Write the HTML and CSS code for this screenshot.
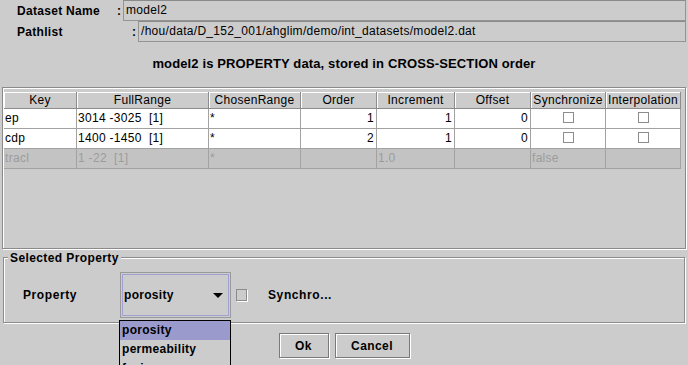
FILE: index.html
```html
<!DOCTYPE html>
<html lang="en">
<head>
	<meta charset="UTF-8">
	<title>Dataset</title>
	<link rel="stylesheet" href="styles.css">
</head>
<body>
	<div class="info">
		<div class="info-row">
			<span class="info-label name">Dataset Name</span>
			<span class="colon">:</span>
			<div class="field">model2</div>
		</div>
		<div class="info-row">
			<span class="info-label path">Pathlist</span>
			<span class="colon">:</span>
			<div class="field">/hou/data/D_152_001/ahglim/demo/int_datasets/model2.dat</div>
		</div>
	</div>
	<p class="caption">model2 is PROPERTY data, stored in CROSS-SECTION order</p>
	<div class="scroll">
		<table class="grid">
			<colgroup>
				<col class="c-key"><col class="c-full"><col class="c-chosen"><col class="c-order">
				<col class="c-inc"><col class="c-off"><col class="c-sync"><col class="c-interp">
			</colgroup>
			<thead>
				<tr>
					<th>Key</th><th>FullRange</th><th>ChosenRange</th><th>Order</th>
					<th>Increment</th><th>Offset</th><th>Synchronize</th><th>Interpolation</th>
				</tr>
			</thead>
			<tbody>
				<tr>
					<td>ep</td><td class="pre">3014 -3025  [1]</td><td>*</td>
					<td class="num">1</td><td class="num">1</td><td class="num">0</td>
					<td class="mid"><span class="box"></span></td><td class="mid"><span class="box"></span></td>
				</tr>
				<tr>
					<td>cdp</td><td class="pre">1400 -1450  [1]</td><td>*</td>
					<td class="num">2</td><td class="num">1</td><td class="num">0</td>
					<td class="mid"><span class="box"></span></td><td class="mid"><span class="box"></span></td>
				</tr>
				<tr class="off">
					<td>tracl</td><td class="pre">1 -22  [1]</td><td>*</td>
					<td></td><td>1.0</td><td></td><td>false</td><td></td>
				</tr>
			</tbody>
		</table>
	</div>
	<div class="group">
		<div class="group-title">Selected Property</div>
		<div class="prop-row">
			<span class="prop-label">Property</span>
			<div class="combo">
				<div class="combo-inner"><span>porosity</span><span class="arrow"></span></div>
			</div>
			<span class="check"></span>
			<span class="sync">Synchro...</span>
		</div>
	</div>
	<div class="buttons">
		<button class="btn ok">Ok</button>
		<button class="btn cancel">Cancel</button>
	</div>
	<ul class="popup">
		<li class="sel">porosity</li>
		<li>permeability</li>
		<li>facies</li>
	</ul>
</body>
</html>
```
FILE: styles.css
```css
*{margin: 0; padding: 0; box-sizing: border-box;}
html, body{width: 688px; height: 365px; overflow: hidden;}
body{position: relative; background: #cccccc; color: #000; font: 12px "Liberation Sans", Arial, sans-serif; letter-spacing: .3px;}

/* top info rows */
.info-row{display: flex; align-items: center; height: 21px;}
.info-label{font-weight: bold; padding-left: 17px; letter-spacing: .3px;}
.info-label.name{width: 117px;}
.info-label.path{width: 132px;}
.colon{width: 6px; font-weight: bold;}
.field{flex: 1; height: 21px; margin-right: 2px; padding-left: 2px; line-height: 19px; border: 1px solid #949494; border-top-color: #8a8a8a; white-space: nowrap; overflow: hidden;}

.caption{margin-top: 14px; text-align: center; font-weight: bold; font-size: 13px; line-height: 16px; letter-spacing: .13px;}

/* table */
.scroll{margin: 15px 2px 0; height: 162px; padding: 4px 0 0 1px; border: 1px solid #8a8a8a; box-shadow: inset 1px 1px #fff, 1px 1px #fff;}
.grid{border-collapse: separate; border-spacing: 0; table-layout: fixed; width: 677px;}
.c-key{width: 73px;}
.c-full{width: 132px;}
.c-chosen{width: 92px;}
.c-order{width: 76px;}
.c-inc{width: 78px;}
.c-off{width: 76px;}
.c-sync{width: 75px;}
.c-interp{width: 75px;}
.grid th{height: 17px; font-weight: normal; text-align: center; line-height: 15px; border-right: 1px solid #8c8c8c; border-bottom: 1px solid #8c8c8c; box-shadow: inset 1px 1px #fff; white-space: nowrap; overflow: hidden;}
.grid td{height: 20px; padding: 0 2px 0 1px; background: #fff; border-right: 1px solid #a2a2a2; border-bottom: 1px solid #a2a2a2; white-space: nowrap; overflow: hidden; line-height: 19px;}
.grid td.pre{white-space: pre;}
.grid td.num{text-align: right;}
.grid td.mid{text-align: center; padding: 0;}
.grid tr.off td{background: #c3c3c3; color: #9c9c9c;}
.box{display: inline-block; width: 11px; height: 11px; vertical-align: -1px; border: 1px solid #8c8c8c;}

/* selected property group */
.group{margin: 8px 3px 0; height: 66px; border: 1px solid #8c8c8c; box-shadow: inset 1px 1px #fff, 1px 1px #fff;}
.group-title{width: max-content; margin: -7px 0 0 4px; padding: 0 2px; line-height: 14px; background: #cccccc; font-weight: bold; letter-spacing: .4px;}
.prop-row{display: flex; align-items: center; height: 46px; margin-top: 7px;}
.prop-label{width: 116px; padding-left: 19px; font-weight: bold; letter-spacing: .6px;}
.combo{width: 111px; height: 46px; padding: 1px; border: 1px solid #9a9a9a;}
.combo-inner{display: flex; align-items: center; justify-content: space-between; height: 100%; padding: 0 5px 0 1px; border: 1px solid #a0a0d4; font-weight: bold;}
.arrow{width: 0; height: 0; border-left: 5px solid transparent; border-right: 5px solid transparent; border-top: 5px solid #000;}
.check{width: 11px; height: 12px; margin-left: 5px; border: 1px solid #8c8c8c; box-shadow: 1px 1px #fff;}
.sync{margin-left: 21px; font-weight: bold; letter-spacing: .6px;}

/* buttons */
.buttons{display: flex; justify-content: center; gap: 6px; margin-top: 10px;}
.btn{height: 25px; background: #cccccc; border: 1px solid #7a7a7a; box-shadow: inset 1px 1px #fff, 1px 1px #fff; font: bold 12px "Liberation Sans", Arial, sans-serif; letter-spacing: .4px; color: #000;}
.btn.ok{width: 50px;}
.btn.cancel{width: 75px;}

/* open combo list */
.popup{position: absolute; left: 119px; top: 320px; width: 112px; height: 60px; list-style: none; background: #cccccc; border: 1px solid #000; font-weight: bold;}
.popup li{height: 19px; line-height: 19px; padding-left: 2px;}
.popup li.sel{background: #9a9acc;}
```
